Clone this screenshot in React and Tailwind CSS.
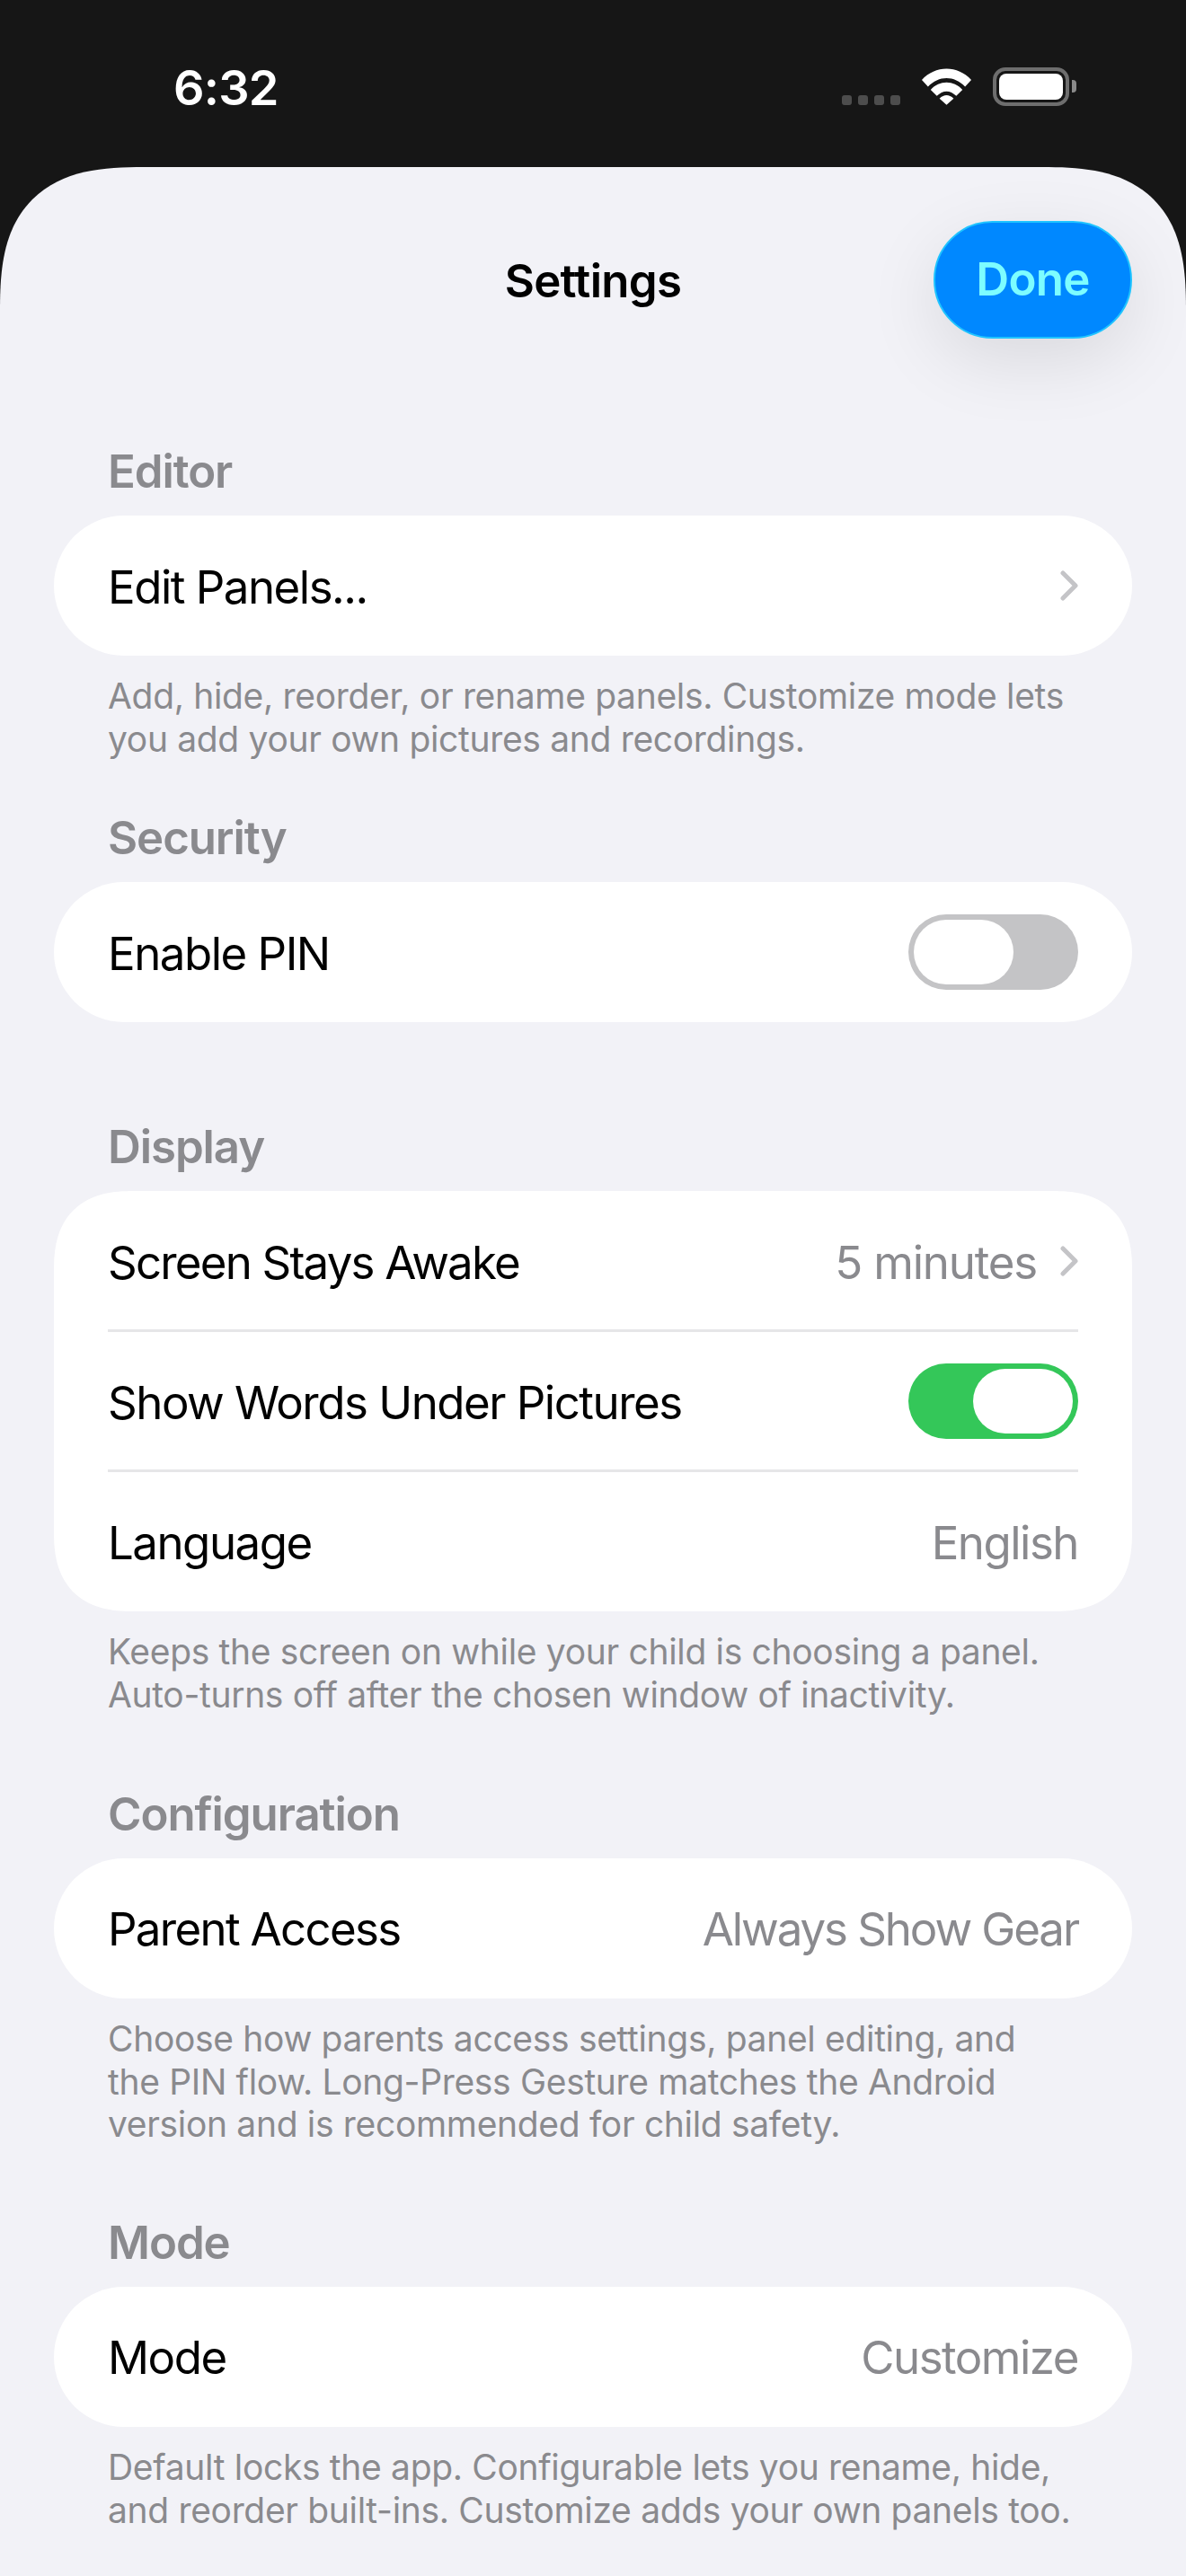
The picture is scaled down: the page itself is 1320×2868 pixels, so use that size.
import React from 'react';

const font = { fontFamily: 'Inter, "Liberation Sans", sans-serif' };

const Chevron = () => (
  <svg width="20" height="34" viewBox="0 0 20 34" fill="none" className="block">
    <path d="M3 3 L17 17 L3 31" stroke="#c4c4c7" strokeWidth="5" strokeLinecap="round" strokeLinejoin="round" />
  </svg>
);

const Toggle = ({ on }) => (
  <div className={`flex h-[84px] w-[189px] items-center rounded-full p-[6px] ${on ? 'justify-end bg-[#34c759]' : 'justify-start bg-[#c4c4c6]'}`}>
    <div className="h-[72px] w-[111px] rounded-full bg-white" />
  </div>
);

const Row = ({ label, value, chevron, toggle, divider, labelClass = 'tracking-[-1.5px]', valueClass = 'tracking-[-1.5px]' }) => (
  <div className="relative flex h-[156px] items-center justify-between">
    <span className={`mt-[3px] text-[51px] leading-[60px] text-black ${labelClass}`}>{label}</span>
    <div className="flex items-center gap-[26px]">
      {value && <span className={`mt-[3px] text-[51px] leading-[60px] text-[#8a8a8e] ${valueClass}`}>{value}</span>}
      {chevron && <Chevron />}
      {toggle !== undefined && <Toggle on={toggle} />}
    </div>
    {divider && <div className="absolute -bottom-[1px] left-0 right-0 h-[3px] bg-[#e6e6e8]" />}
  </div>
);

const Section = ({ title, children, footer, className, cardClass = 'rounded-full' }) => (
  <section className={className}>
    <h2 className="px-[120px] text-[51px] leading-[58px] font-semibold tracking-[-1.1px] text-[#8a8a8e]">{title}</h2>
    <div className={`mx-[60px] mt-[20px] bg-white px-[60px] ${cardClass}`}>{children}</div>
    {footer && (
      <p className="mt-[21px] px-[120px] text-[39px] leading-[47.7px] tracking-[-0.33px] text-[#8a8a8e]">
        {footer.map((line) => (
          <span key={line} className="block whitespace-nowrap">{line}</span>
        ))}
      </p>
    )}
  </section>
);

const StatusBar = () => (
  <div className="flex h-[186px] items-start justify-between bg-[#161616] pl-[193px] pr-[130px] pt-[66px] text-white">
    <span className="text-[54px] leading-[64px] font-semibold tracking-[-0.8px]">6:32</span>
    <div className="flex items-end pt-[9px]">
      <div className="mb-[1px] flex gap-[7px]">
        {[0, 1, 2, 3].map((i) => (
          <div key={i} className="h-[11px] w-[11px] rounded-[3px] bg-[#4d4d4d]" />
        ))}
      </div>
      <svg width="57" height="42" viewBox="0 0 58 42" className="mb-[1px] ml-[23px] block">
        <path d="M1 14 C16 -3 42 -3 57 14 L50 21.5 C38 8.5 20 8.5 8 21.5 Z" fill="#fff" />
        <path d="M11 25 C21 14 37 14 47 25 L40 32 C33 25 25 25 18 32 Z" fill="#fff" />
        <path d="M21 35 C26 30 32 30 37 35 L29 42 Z" fill="#fff" />
      </svg>
      <div className="relative ml-[23px] h-[43px] w-[85px] rounded-[14px] border-[4px] border-[#6e6e6e] p-[3px]">
        <div className="h-full w-full rounded-[8px] bg-white" />
        <div className="absolute -right-[12px] top-[10px] h-[14px] w-[5px] rounded-r-[4px] bg-[#8a8a8a]" />
      </div>
    </div>
  </div>
);

const App = () => (
  <div className="h-[2868px] w-[1320px] overflow-hidden bg-[#161616]" style={font}>
    <StatusBar />
    <main className="h-[2682px] rounded-t-[160px] bg-[#f2f2f7] [corner-shape:superellipse(1.44)]">
      <header className="relative flex h-[191px] items-end justify-center pb-[34px]">
        <h1 className="text-[51px] leading-[60px] font-semibold tracking-[-0.7px] text-black">Settings</h1>
        <button className="absolute left-[1039px] top-[60px] h-[131px] w-[221px] rounded-full border-[2px] border-[#1fc4ff] bg-[#0088ff] text-[51px] font-semibold tracking-[-0.7px] text-[#7dfdff] shadow-[0_24px_80px_rgba(0,0,0,0.1)]">
          Done
        </button>
      </header>
      <Section
        className="mt-[119px]"
        title="Editor"
        footer={['Add, hide, reorder, or rename panels. Customize mode lets', 'you add your own pictures and recordings.']}
      >
        <Row label="Edit Panels..." chevron />
      </Section>
      <Section className="mt-[58px]" title="Security">
        <Row label="Enable PIN" toggle={false} />
      </Section>
      <Section
        className="mt-[110px]"
        title="Display"
        cardClass="rounded-[88px] [corner-shape:superellipse(1.3)]"
        footer={['Keeps the screen on while your child is choosing a panel.', 'Auto-turns off after the chosen window of inactivity.']}
      >
        <Row label="Screen Stays Awake" value="5 minutes" chevron divider labelClass="tracking-[-1.8px]" valueClass="tracking-[-1.2px]" />
        <Row label="Show Words Under Pictures" toggle divider />
        <Row label="Language" value="English" />
      </Section>
      <Section
        className="mt-[80px]"
        title="Configuration"
        footer={['Choose how parents access settings, panel editing, and', 'the PIN flow. Long-Press Gesture matches the Android', 'version and is recommended for child safety.']}
      >
        <Row label="Parent Access" value="Always Show Gear" labelClass="tracking-[-1.7px]" valueClass="tracking-[-2.1px]" />
      </Section>
      <Section
        className="mt-[79px]"
        title="Mode"
        footer={['Default locks the app. Configurable lets you rename, hide,', 'and reorder built-ins. Customize adds your own panels too.']}
      >
        <Row label="Mode" value="Customize" />
      </Section>
    </main>
  </div>
);

export default App;
